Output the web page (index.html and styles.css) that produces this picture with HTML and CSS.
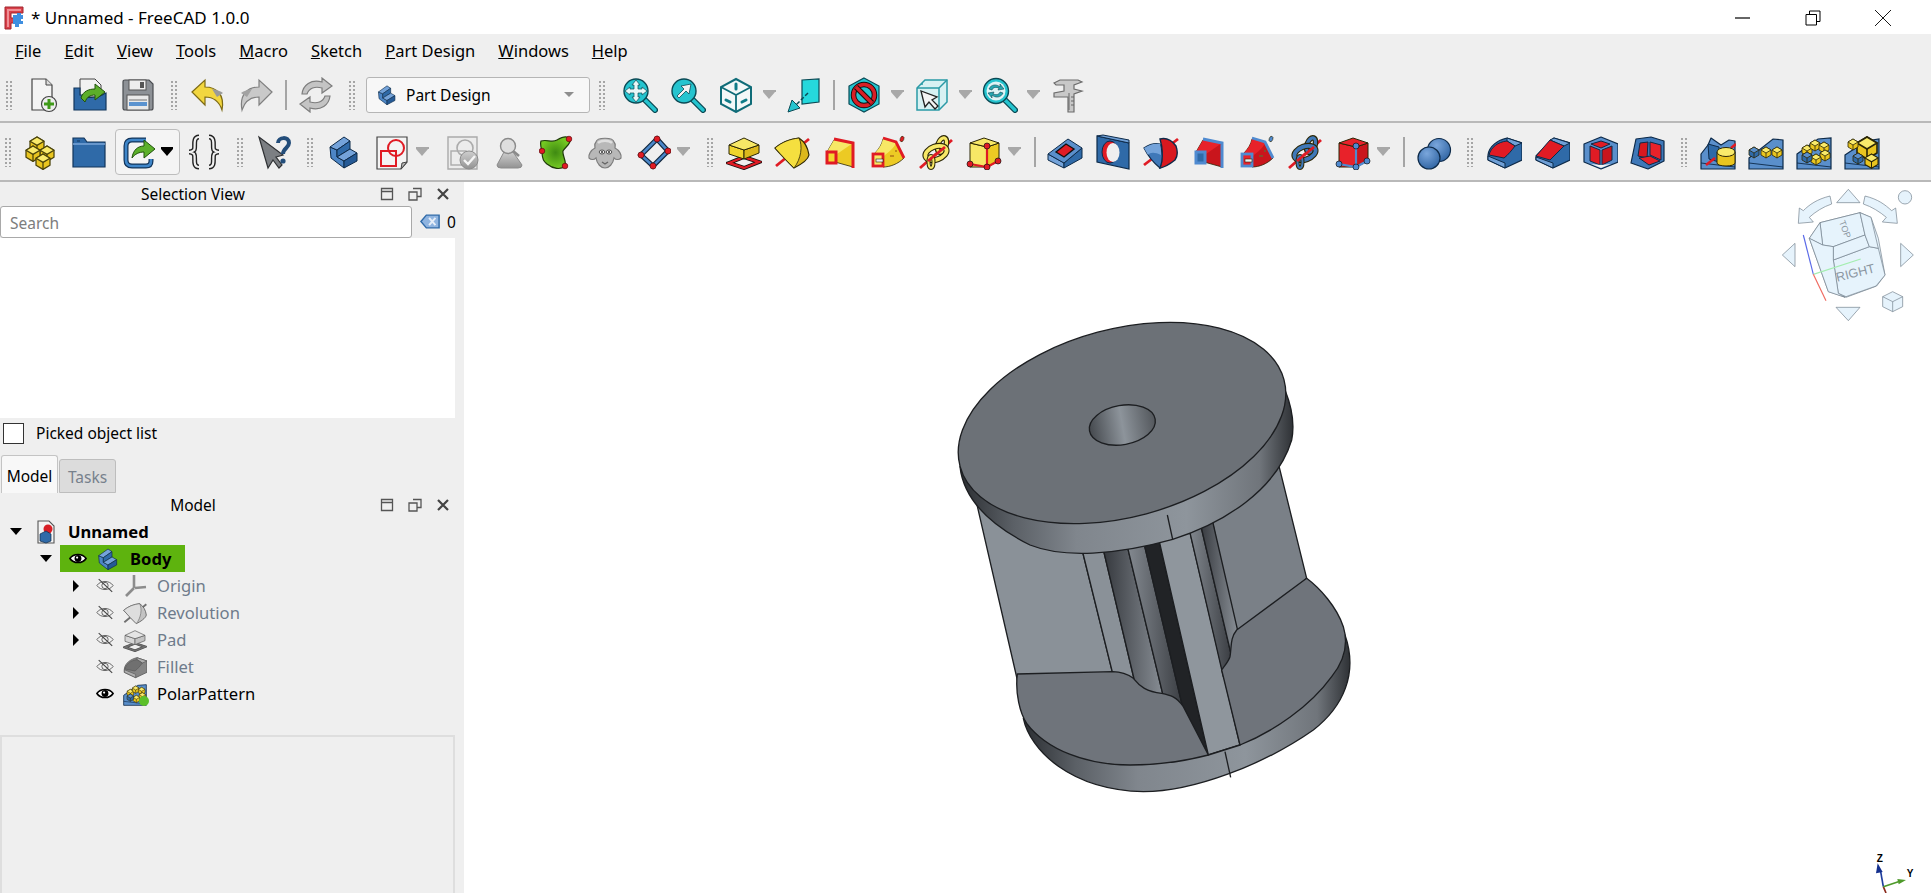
FILE: index.html

```html
<!DOCTYPE html>
<html lang="en">
<head>
    <meta charset="UTF-8">
    <title>* Unnamed - FreeCAD 1.0.0</title>
    <link rel="stylesheet" href="styles.css">
</head>
<body>
    <!-- icon sprite -->
    <svg class="sprite" xmlns="http://www.w3.org/2000/svg">
        <defs>
            <linearGradient id="rimGrad" x1="0" x2="1" y1="0" y2="0">
                <stop offset="0" stop-color="#2b2e32"/>
                <stop offset=".16" stop-color="#5b6066"/>
                <stop offset=".35" stop-color="#80868d"/>
                <stop offset=".68" stop-color="#8e959c"/>
                <stop offset=".9" stop-color="#70757b"/>
                <stop offset="1" stop-color="#2f3236"/>
            </linearGradient>
            <linearGradient id="holeGrad" x1="0" x2="1" y1="0" y2="0">
                <stop offset="0" stop-color="#45494e"/>
                <stop offset=".5" stop-color="#8d949b"/>
                <stop offset="1" stop-color="#53575c"/>
            </linearGradient>
            <linearGradient id="grooveA" x1="0" x2="1" y1="0" y2="0">
                <stop offset="0" stop-color="#32353a"/>
                <stop offset="1" stop-color="#8a9097"/>
            </linearGradient>
            <linearGradient id="grooveB" x1="0" x2="1" y1="0" y2="0">
                <stop offset="0" stop-color="#878d94"/>
                <stop offset="1" stop-color="#3a3d42"/>
            </linearGradient>
            <radialGradient id="blobGrad">
                <stop offset="0" stop-color="#3f8a12"/>
                <stop offset="1" stop-color="#74c922"/>
            </radialGradient>
            <radialGradient id="sphereGrad" cx=".4" cy=".3" r=".8">
                <stop offset="0" stop-color="#7aa6dc"/>
                <stop offset="1" stop-color="#2a5f9e"/>
            </radialGradient>
            <linearGradient id="greyGrad" x1="0" x2="0" y1="0" y2="1">
                <stop offset="0" stop-color="#cfcfcf"/>
                <stop offset="1" stop-color="#929292"/>
            </linearGradient>
            <g id="cy"><path d="M0 3 5 0 10 3V8L5 11 0 8Z" fill="#e9c51f"/><path d="M0 3 5 0 10 3 5 6Z" fill="#f9ea6a"/><path d="M5 6V11" fill="none"/></g>
            <g id="cb"><path d="M0 3 5 0 10 3V8L5 11 0 8Z" fill="#2f6aa8"/><path d="M0 3 5 0 10 3 5 6Z" fill="#5a8fcb"/><path d="M5 6V11" fill="none"/></g>
            <path id="base-lip" d="M1 29 35 33" fill="none" stroke="#0d2a49" stroke-width=".9"/>
        </defs>

        <symbol id="i-new" viewBox="0 0 36 36"><path d="M8 2H22L28 8V33H8Z" fill="#f4f4f4" stroke="#444" stroke-width="1.2"/><path d="M22 2V8H28" fill="#ddd" stroke="#444"/><circle cx="25" cy="27" r="7.5" fill="#eee" stroke="#444" stroke-width="1.2"/><path d="M25 22V32M20 27H30" stroke="#3f9a18" stroke-width="3"/></symbol>
        <symbol id="i-open" viewBox="0 0 36 36"><path d="M8 2H23L29 8V20H8Z" fill="#f2f2f2" stroke="#444"/><path d="M2 11H8V18H11C15 22 20 20 24 20 28 20 31 17 34 16V33H2Z" fill="#2f6aa8" stroke="#13365c" stroke-width="1.2"/><path d="M9 21C11 14 17 12 23 12V7L33 15 23 23V18C18 18 15 20 13 25Z" fill="#5cae2a" stroke="#20520c"/></symbol>
        <symbol id="i-save" viewBox="0 0 36 36"><path d="M3 5Q3 3 5 3H29L33 7V31Q33 33 31 33H5Q3 33 3 31Z" fill="#8d9196" stroke="#4a4d51" stroke-width="1.2"/><rect x="9" y="3" width="17" height="10" fill="#eee" stroke="#555"/><rect x="20" y="5" width="4" height="6" fill="#555"/><rect x="7" y="18" width="22" height="15" fill="#e9e9e9" stroke="#555"/><path d="M9 23H27" stroke="#999" stroke-width="1.5"/><rect x="9" y="25" width="18" height="4" fill="#5b93cf"/></symbol>
        <symbol id="i-undo" viewBox="0 0 36 36"><path d="M2 15 15 3V10C26 10 35 17 32 33 29 24 24 20 15 20V28Z" fill="#f2d63f" stroke="#7d6a14" stroke-width="1.2"/><path d="M22 12C27 13 31 14 33 16L27 20Z" fill="#9a9a9a"/></symbol>
        <symbol id="i-redo" viewBox="0 0 36 36"><path d="M34 15 21 3V10C10 10 1 17 4 33 7 24 12 20 21 20V28Z" fill="#c9c9c9" stroke="#808080" stroke-width="1.2"/><path d="M14 12C9 13 5 14 3 16L9 20Z" fill="#a2a2a2"/></symbol>
        <symbol id="i-refresh" viewBox="0 0 36 36"><path d="M4 17C5 8 13 2 24 5V1L34 9 24 16V11C17 9 11 11 9 17Z" fill="#c4c4c4" stroke="#7d7d7d" stroke-width="1.2"/><path d="M32 19C31 28 23 34 12 31V35L2 27 12 20V25C19 27 25 25 27 19Z" fill="#c4c4c4" stroke="#7d7d7d" stroke-width="1.2"/></symbol>
        <symbol id="i-body" viewBox="0 0 36 36"><g stroke="#0d2a49" stroke-linejoin="round"><path d="M4 13 11 16V23L18 27V34L5 24Z" fill="#4d86c6"/><path d="M4 13 18 3 24 7 11 16Z" fill="#74a3da"/><path d="M11 16 24 7V15L11 23Z" fill="#2f6aa8"/><path d="M11 23 24 15 31 19 18 27Z" fill="#74a3da"/><path d="M18 27 31 19V27L18 34Z" fill="#255a96"/></g></symbol>
        <symbol id="i-fitall" viewBox="0 0 36 36"><path d="M23 23 33 33" stroke="#0b4a55" stroke-width="6" stroke-linecap="round"/><path d="M23 23 33 33" stroke="#25c4cf" stroke-width="3.4" stroke-linecap="round"/><circle cx="14" cy="14" r="12" fill="#25c4cf" stroke="#0b4a55" stroke-width="1.4"/><path d="M14 3 18 8H16V12H20V10L25 14 20 18V16H16V20H18L14 25 10 20H12V16H8V18L3 14 8 10V12H12V8H10Z" fill="#e9f6f7" stroke="#0b4a55" stroke-width=".7"/></symbol>
        <symbol id="i-fitsel" viewBox="0 0 36 36"><path d="M23 23 33 33" stroke="#0b4a55" stroke-width="6" stroke-linecap="round"/><path d="M23 23 33 33" stroke="#25c4cf" stroke-width="3.4" stroke-linecap="round"/><circle cx="14" cy="14" r="12" fill="#25c4cf" stroke="#0b4a55" stroke-width="1.4"/><path d="M21 7 19 17 16 14 9 21 7 19 14 12 11 9Z" fill="#f2f2f2" stroke="#0b4a55" stroke-width=".8"/></symbol>
        <symbol id="i-iso" viewBox="0 0 36 36"><path d="M18 2 33 10V27L18 35 3 27V10Z" fill="#f3f8f8" stroke="#0f6c78" stroke-width="2"/><path d="M3 10 18 18 33 10M18 18V35" fill="none" stroke="#0f6c78" stroke-width="1.8"/><path d="M18 7V12M8 23 12 25M24 25 28 23" stroke="#0f7c88" stroke-width="3" stroke-linecap="round"/></symbol>
        <symbol id="i-plane" viewBox="0 0 36 36"><path d="M16 3 33 2V25L16 27Z" fill="#25d8dc" stroke="#0b4a55" stroke-width="1.2"/><path d="M22 16 10 28" stroke="#0b4a55" stroke-width="1.5" stroke-dasharray="4 2"/><path d="M2 35 6 23 14 31Z" fill="#25c4cf" stroke="#0b4a55"/></symbol>
        <symbol id="i-no" viewBox="0 0 36 36"><path d="M18 1 33 9V27L18 35 3 27V9Z" fill="#25c4cf" stroke="#0b4a55" stroke-width="1.2"/><circle cx="18" cy="18" r="10.5" fill="#25c4cf" stroke="#111" stroke-width="5.5"/><circle cx="18" cy="18" r="10.5" fill="none" stroke="#d81f26" stroke-width="3.6"/><path d="M10 10 26 26" stroke="#111" stroke-width="5.5"/><path d="M10 10 26 26" stroke="#d81f26" stroke-width="3.4"/></symbol>
        <symbol id="i-boxsel" viewBox="0 0 36 36"><path d="M3 11 11 3H33V25L25 33H3Z" fill="#d8f1f3" stroke="#2a9aa6" stroke-width="1.5"/><path d="M3 11H25V33M25 11 33 3M8 6V8" fill="none" stroke="#2a9aa6" stroke-width="1.5"/><path d="M7 14 11 30 15 25 21 32 24 29 18 23 23 20Z" fill="#f4f4f4" stroke="#222" stroke-width="1.3"/></symbol>
        <symbol id="i-sync" viewBox="0 0 36 36"><path d="M23 23 33 33" stroke="#0b4a55" stroke-width="6" stroke-linecap="round"/><path d="M23 23 33 33" stroke="#25c4cf" stroke-width="3.4" stroke-linecap="round"/><circle cx="14" cy="14" r="12.5" fill="#25c4cf" stroke="#0b4a55" stroke-width="1.4"/><circle cx="14" cy="14" r="9.5" fill="#dff3f5"/><path d="M7 12C9 7 15 7 18 10V7L22 12 16 13 17 11C14 10 11 10 10 13ZM21 16C19 21 13 21 10 18V21L6 16 12 15 11 17C14 18 17 18 18 15Z" fill="#25a8b2" stroke="#0b4a55" stroke-width=".6"/></symbol>
        <symbol id="i-measure" viewBox="0 0 36 36"><path d="M4 6 10 3H28L32 5 24 8V12L32 14 24 17V35H18V20H4V16L14 14V8H6Z" fill="#c8c8c8" stroke="#6d6d6d" stroke-width="1.2"/><path d="M19 16V33M21 20H24M21 24H24M21 28H24" stroke="#666"/></symbol>
        <symbol id="i-parts" viewBox="0 0 36 36"><g stroke="#4b430a" stroke-width=".9" stroke-linejoin="round"><use href="#cy" transform="translate(7 3) scale(1.4)"/><use href="#cy" transform="translate(17 12) scale(1.4)"/><use href="#cy" transform="translate(3 12) scale(1.4)"/><use href="#cy" transform="translate(13 20) scale(1.4)"/></g></symbol>
        <symbol id="i-folder" viewBox="0 0 36 36"><path d="M2 4H13L16 8H34V33H2Z" fill="#2f6aa8" stroke="#12345a" stroke-width="1.2"/><path d="M2 10H34" stroke="#7aa6d8" stroke-width="1.5"/><path d="M6 7H9" stroke="#12345a"/></symbol>
        <symbol id="i-link" viewBox="0 0 36 36"><path d="M24 6H10Q4 6 4 12V26Q4 32 10 32H24Q29 32 29 27V25" fill="none" stroke="#12345a" stroke-width="5"/><path d="M24 6H10Q4 6 4 12V26Q4 32 10 32H24Q29 32 29 27V25" fill="none" stroke="#3f86c9" stroke-width="2.6"/><path d="M10 24C11 16 16 12 22 12V6L33 15 22 24V18C17 18 13 20 10 24Z" fill="#5cb02a" stroke="#20520c"/></symbol>
        <symbol id="i-braces" viewBox="0 0 36 36"><path d="M13 3C6 3 10 14 8 16 7 17 5 18 3 18 5 18 7 19 8 20 10 23 6 33 13 33M23 3C30 3 26 14 28 16 29 17 31 18 33 18 31 18 29 19 28 20 26 23 30 33 23 33" fill="none" stroke="#222" stroke-width="5"/><path d="M13 3C6 3 10 14 8 16 7 17 5 18 3 18 5 18 7 19 8 20 10 23 6 33 13 33M23 3C30 3 26 14 28 16 29 17 31 18 33 18 31 18 29 19 28 20 26 23 30 33 23 33" fill="none" stroke="#f0f0f0" stroke-width="2.2"/></symbol>
        <symbol id="i-help" viewBox="0 0 36 36"><path d="M3 3 12 34 17 26 23 34 26 31 20 23 27 21Z" fill="#7c7f83" stroke="#2e3033" stroke-width="1.2"/><path d="M22 9C22 3 33 2 33 9 33 14 27 14 27 20" fill="none" stroke="#234d7a" stroke-width="4"/><circle cx="27" cy="27" r="2.6" fill="#234d7a"/></symbol>
        <symbol id="i-sketch" viewBox="0 0 36 36"><path d="M3 3H33V28L27 35H3Z" fill="#f4f4f4" stroke="#444" stroke-width="1.2"/><path d="M27 35 28 29 33 28Z" fill="#bbb" stroke="#444"/><circle cx="22" cy="14" r="8" fill="none" stroke="#e01b24" stroke-width="2"/><rect x="7" y="17" width="15" height="15" fill="none" stroke="#e01b24" stroke-width="2"/></symbol>
        <symbol id="i-validate" viewBox="0 0 36 36"><path d="M5 3H34V35H5Z" fill="#ececec" stroke="#ababab" stroke-width="1.4"/><rect x="8" y="17" width="15" height="14" fill="none" stroke="#ababab" stroke-width="1.4"/><circle cx="22" cy="14" r="8" fill="none" stroke="#ababab" stroke-width="1.6"/><circle cx="26" cy="26" r="9" fill="url(#greyGrad)" stroke="#8c8c8c"/><path d="M21 26 25 30 32 22" fill="none" stroke="#f5f5f5" stroke-width="2.4"/></symbol>
        <symbol id="i-attach" viewBox="0 0 36 36"><path d="M13 18 6 31Q6 34 10 34H27Q31 34 31 31L22 18Z" fill="url(#greyGrad)" stroke="#8c8c8c"/><path d="M22 17 28 22" stroke="#8a8a8a" stroke-width="2.6"/><circle cx="17" cy="12" r="7.500" fill="#dedede" stroke="#8a8a8a" stroke-width="1.4"/></symbol>
        <symbol id="i-blob" viewBox="0 0 36 36"><path d="M2 7C8 5 13 9 18 6S28 1 31 5C33 9 26 13 24 17 23 21 28 28 26 32 22 36 14 35 8 30 6 28 3 27 3 17 2 14 1 10 2 7Z" fill="url(#blobGrad)" stroke="#1f3a0a" stroke-width="1.2"/><g fill="#e01b24" stroke="#5c0a0e" stroke-width=".7"><circle cx="30" cy="5" r="2.800"/><circle cx="3" cy="17" r="2.800"/><circle cx="26" cy="32" r="2.800"/></g></symbol>
        <symbol id="i-sheep" viewBox="0 0 36 36"><path d="M9 8C10 3 26 3 27 8 29 10 28 12 28 14 32 16 35 21 34 24 32 26 29 26 27 24 26 30 22 34 18 34 14 34 10 30 9 24 7 26 4 26 2 24 1 21 4 16 8 14 8 12 7 10 9 8Z" fill="#b8b8b8" stroke="#7d7d7d" stroke-width="1.2"/><path d="M11 9C14 6 22 6 25 9" fill="none" stroke="#dedede" stroke-width="2.400"/><ellipse cx="15" cy="18" rx="2.800" ry="2" fill="#eee" stroke="#555"/><ellipse cx="22" cy="18" rx="2.800" ry="2" fill="#eee" stroke="#555"/><circle cx="15" cy="18" r="1" fill="#333"/><circle cx="22" cy="18" r="1" fill="#333"/><path d="M15 28 18 30 21 28" fill="none" stroke="#666" stroke-width="1.400"/></symbol>
        <symbol id="i-datum" viewBox="0 0 36 36"><path d="M22 5 33 17 18 32 6 21Z" fill="none" stroke="#10263d" stroke-width="5"/><path d="M22 5 33 17 18 32 6 21Z" fill="none" stroke="#4a86c8" stroke-width="2.600"/><g fill="#e01b24" stroke="#5c0a0e" stroke-width=".7"><circle cx="22" cy="5" r="3"/><circle cx="33" cy="17" r="3"/><circle cx="18" cy="32" r="3"/><circle cx="6" cy="21" r="3"/></g></symbol>
        <symbol id="i-pad" viewBox="0 0 36 36"><path d="M3 29 18 23 33 28 18 34Z" fill="none" stroke="#111" stroke-width="4"/><path d="M3 29 18 23 33 28 18 34Z" fill="none" stroke="#e01b24" stroke-width="2.400"/><g stroke="#2b2606" stroke-linejoin="round"><path d="M3 11V20L18 25V16Z" fill="#f0d42c"/><path d="M18 16V25L33 19V11Z" fill="#dcb81c"/><path d="M3 11 18 4 33 11 18 16Z" fill="#f7e866"/></g></symbol>
        <symbol id="i-revolve" viewBox="0 0 36 36"><path d="M2 32 35 5" stroke="#e01b24" stroke-width="2.800"/><path d="M1 14C8 8 16 5 25 4 31 8 34 14 35 21 34 26 26 31 20 34 14 28 8 22 1 14Z" fill="#dcb81c" stroke="#2b2606" stroke-width="1.200"/><path d="M1 14C8 8 16 5 25 4 29 12 27 25 20 34 14 28 8 22 1 14Z" fill="#f5df3f" stroke="#2b2606" stroke-width=".8"/></symbol>
        <symbol id="i-groove" viewBox="0 0 36 36"><path d="M1 31 35 5" stroke="#e01b24" stroke-width="2.800"/><path d="M17 5C25 3 30 8 33 12 35 18 35 22 32 26 27 30 22 33 17 34 20 26 20 14 17 5Z" fill="#d8181f" stroke="#0d2a49" stroke-width="1.400"/><path d="M1 14C7 10 12 9 17 10 20 18 20 26 17 34 12 30 6 24 1 14Z" fill="#3f78b8" stroke="#0d2a49" stroke-width="1.200"/><path d="M1 14C7 10 12 9 17 10 18 14 18 17 18 21 12 18 7 18 5 21Z" fill="#74a3da"/></symbol>
        <symbol id="i-loft" viewBox="0 0 36 36"><path d="M12 6 31 9V33L13 28 5 18Z" fill="var(--d)" stroke="#2b2606" stroke-width=".8"/><path d="M12 6 31 9 15 20 5 18Z" fill="var(--a)"/><path d="M12 5 31 9V34" fill="none" stroke="var(--b)" stroke-width="3"/><rect x="5" y="18" width="9" height="11" fill="var(--e)" stroke="var(--b)" stroke-width="3"/></symbol>
        <symbol id="i-pipe" viewBox="0 0 36 36"><path d="M13 5 26 8 34 24C28 30 20 33 13 33L5 19C9 15 12 10 13 5Z" fill="var(--d)" stroke="#2b2606" stroke-width=".8"/><path d="M13 5 26 8C25 14 18 18 14 22L5 19C9 15 12 10 13 5Z" fill="var(--a)"/><path d="M13 4 26 8 34 24" fill="none" stroke="var(--b)" stroke-width="2.800"/><rect x="3" y="20" width="10" height="12" fill="var(--a)" stroke="var(--b)" stroke-width="2.800"/><rect x="6" y="25" width="7" height="3" fill="#efefef" stroke="#2b2606" stroke-width=".6"/><ellipse cx="32" cy="5" rx="1.800" ry="2.800" fill="var(--b)" stroke="#2b2606" stroke-width=".6" transform="rotate(20 32 5)"/><path d="M20 22H24M25 17H27" stroke="var(--f)" stroke-width="2"/></symbol>
        <symbol id="i-helix" viewBox="0 0 36 36"><path d="M2 34 34 6" stroke="var(--b)" stroke-width="2.800"/><g fill="none"><ellipse cx="24" cy="11" rx="4" ry="7.500" transform="rotate(20 24 11)" stroke="#2b2606" stroke-width="5.500"/><ellipse cx="24" cy="11" rx="4" ry="7.500" transform="rotate(20 24 11)" stroke="var(--a)" stroke-width="3.200"/><ellipse cx="18" cy="19" rx="11" ry="6.500" transform="rotate(-20 18 19)" stroke="#2b2606" stroke-width="6"/><ellipse cx="18" cy="19" rx="11" ry="6.500" transform="rotate(-20 18 19)" stroke="var(--a)" stroke-width="3.800"/><ellipse cx="13" cy="28" rx="2.500" ry="6" stroke="#2b2606" stroke-width="4"/><ellipse cx="13" cy="28" rx="2.500" ry="6" stroke="var(--a)" stroke-width="2"/></g><path d="M10 27 27 13" stroke="var(--b)" stroke-width="2.800"/></symbol>
        <symbol id="i-prim" viewBox="0 0 36 36"><g stroke="#2b2606" stroke-linejoin="round"><path d="M4 9 21 13V33H4Z" fill="var(--a)"/><path d="M21 13 33 9V27L21 33Z" fill="var(--d)"/><path d="M4 9 18 4 33 9 21 13Z" fill="var(--a)"/></g><path d="M21 12V33M4 30 21 33 32 27" fill="none" stroke="var(--b)" stroke-width="2.200"/><g fill="var(--b)" stroke="#111" stroke-width=".7"><circle cx="21" cy="12" r="3"/><circle cx="4" cy="30" r="3"/><circle cx="21" cy="33" r="3"/><circle cx="32" cy="27" r="3"/></g></symbol>
        <symbol id="i-pocket" viewBox="0 0 36 36"><g stroke="#0d2a49" stroke-linejoin="round"><path d="M1 20V26L17 34V29Z" fill="#74a3da"/><path d="M17 29V34L35 24V14Z" fill="#2f6aa8"/><path d="M1 20 21 5 35 14 17 29Z" fill="#5a8fcb"/></g><path d="M9 18 19 10 27 15 17 23Z" fill="#e01b24" stroke="#111" stroke-width="1.400"/></symbol>
        <symbol id="i-hole" viewBox="0 0 36 36"><path d="M2 2 34 9V35L2 28Z" fill="#2f6aa8" stroke="#0d2a49" stroke-width="1.200"/><path d="M2 2 8 1 34 6V9Z" fill="#6f9fd6" stroke="#0d2a49"/><ellipse cx="15" cy="18" rx="8" ry="11" fill="#e01b24" stroke="#0d2a49"/><ellipse cx="18" cy="18.500" rx="6.500" ry="9.500" fill="#efefef"/></symbol>
        <symbol id="i-fillet" viewBox="0 0 36 36"><g stroke="#0d2a49" stroke-linejoin="round"><path d="M2 21C3 12 12 6 21 4L36 9V26L19 34 2 26Z" fill="#2f6aa8" stroke-width="1.200"/><path d="M21 4 36 9 29 12 21 7Z" fill="#6f9fd6"/><path d="M3 21C5 13 12 8 21 7L29 12C26 16 22 21 18 24Z" fill="#e01b24"/><path d="M2 22 19 29V34L2 26Z" fill="#6f9fd6"/></g></symbol>
        <symbol id="i-chamfer" viewBox="0 0 36 36"><g stroke="#0d2a49" stroke-linejoin="round"><path d="M2 22 20 4 36 9V26L19 34 2 26Z" fill="#2f6aa8" stroke-width="1.200"/><path d="M20 4 36 9 30 12 16 6Z" fill="#6f9fd6"/><path d="M2 22 16 6 30 12 16 26Z" fill="#e01b24"/><path d="M2 23 19 29V34L2 26Z" fill="#6f9fd6"/></g></symbol>
        <symbol id="i-draft" viewBox="0 0 36 36"><g stroke="#0d2a49" stroke-linejoin="round"><path d="M19 3 36 10V28L19 35 2 28V10Z" fill="#5a8fcb" stroke-width="1.200"/><path d="M8 12 18 16V31L8 27Z" fill="#e01b24"/><path d="M20 16 30 12V26L20 31Z" fill="#c9151c"/><path d="M9 10 19 7 28 10 19 14Z" fill="#e01b24"/></g><path d="M9 30 19 34 29 30 19 31Z" fill="#f2f2f2"/></symbol>
        <symbol id="i-thick" viewBox="0 0 36 36"><g stroke="#0d2a49" stroke-linejoin="round"><path d="M6 5 21 3 34 7V27L18 35 1 29Z" fill="#3f78b8" stroke-width="1.200"/><path d="M10 9 18 8 17 24 8 22Z" fill="#d8181f"/><path d="M20 8 31 11V26L20 21Z" fill="#e8222a"/><path d="M9 24 20 22 30 27 19 31Z" fill="#e8222a"/></g></symbol>
        <symbol id="i-mirror" viewBox="0 0 36 36"><g stroke="#0d2a49" stroke-linejoin="round"><path d="M1 35V20L8 11 11 4 21 11 29 6 35 7V35Z" fill="#5a8fcb" stroke-width="1.200"/><path d="M8 10 19 13V28L9 25Z" fill="#2f6aa8"/></g><use href="#base-lip"/><path d="M6 31 15 24M31 14 36 10" stroke="#e01b24" stroke-width="2.600"/><g stroke="#2b2606"><path d="M17 18V29C17 33 35 33 35 29V18Z" fill="#e9c51f"/><ellipse cx="26" cy="18" rx="9" ry="4.500" fill="#f9ea6a"/></g></symbol>
        <symbol id="i-linear" viewBox="0 0 36 36"><path d="M1 24 25 5 35 6V35H1Z" fill="#5a8fcb" stroke="#0d2a49" stroke-width="1.200"/><use href="#base-lip"/><g stroke="#2b2606" stroke-width=".8"><use href="#cb" transform="translate(1 13)"/><use href="#cy" transform="translate(13 13)"/><use href="#cy" transform="translate(24 13)"/></g></symbol>
        <symbol id="i-polar" viewBox="0 0 36 36"><path d="M1 20 22 5 35 4V35H1Z" fill="#5a8fcb" stroke="#0d2a49" stroke-width="1.200"/><use href="#base-lip"/><g stroke="#2b2606" stroke-width=".8"><use href="#cy" transform="translate(6 11)"/><use href="#cy" transform="translate(14 6)"/><use href="#cy" transform="translate(23 8)"/><use href="#cy" transform="translate(24 16)"/><use href="#cy" transform="translate(15 20)"/><use href="#cb" transform="translate(6 18)"/></g></symbol>
        <symbol id="i-multi" viewBox="0 0 36 36"><path d="M1 21 22 7 35 5V35H1Z" fill="#5a8fcb" stroke="#0d2a49" stroke-width="1.200"/><use href="#base-lip"/><g stroke="#2b2606" stroke-width=".8"><use href="#cy" transform="translate(13 3) scale(2)"/><use href="#cy" transform="translate(4 5)"/><use href="#cb" transform="translate(9 19)"/><use href="#cy" transform="translate(21 20) scale(1.300)"/></g></symbol>
        <symbol id="i-bool" viewBox="0 0 36 36"><circle cx="23" cy="16" r="11.500" fill="url(#sphereGrad)" stroke="#0d2a49" stroke-width="1.200"/><circle cx="13" cy="24" r="11" fill="url(#sphereGrad)" stroke="#0d2a49" stroke-width="1.200"/></symbol>
        <symbol id="i-eye" viewBox="0 0 20 14"><path d="M1 7C5 1 15 1 19 7 15 13 5 13 1 7Z" fill="#fff" stroke="#000" stroke-width="1.800"/><circle cx="10" cy="7" r="3.800" fill="#000"/><circle cx="9" cy="6" r="1.200" fill="#fff"/></symbol>
        <symbol id="i-eyeoff" viewBox="0 0 20 16"><path d="M1 8C5 2 15 2 19 8 15 14 5 14 1 8Z" fill="none" stroke="#666" stroke-width="1.100"/><circle cx="10" cy="8" r="3.500" fill="none" stroke="#666" stroke-width="1.100"/><path d="M3 1 18 15" stroke="#444" stroke-width="1.200"/></symbol>
        <symbol id="i-origin" viewBox="0 0 24 24"><path d="M11 1V14M12 14 23 13M11 14 3 22" fill="none" stroke="#8c8c8c" stroke-width="2.600"/></symbol>
        <symbol id="i-doc" viewBox="0 0 18 24"><path d="M1 1H12L17 6V23H1Z" fill="#f4f4f4" stroke="#555" stroke-width="1.100"/><circle cx="11" cy="9" r="4.500" fill="#d81f26"/><path d="M3 14 9 11 14 14V21L9 23 3 21Z" fill="#2f6aa8" stroke="#0d2a49" stroke-width=".7"/></symbol>
        <symbol id="i-clear" viewBox="0 0 22 16"><path d="M1 8 7 1H21V15H7Z" fill="#8fb4e0" stroke="#2f6aa8" stroke-width="1.600"/><path d="M10 4 17 12M17 4 10 12" stroke="#e6eef8" stroke-width="2.200"/></symbol>
        <symbol id="i-dockfloat" viewBox="0 0 14 14"><path d="M1.500 1.500H12.500V12.500H1.500ZM1.500 4.500H12.500" fill="none" stroke="#555" stroke-width="1.300"/></symbol>
        <symbol id="i-dockrestore" viewBox="0 0 14 14"><path d="M5 1.500H13V9.500H9.500M1 5H9V13H1Z" fill="none" stroke="#555" stroke-width="1.300"/></symbol>
        <symbol id="i-dockclose" viewBox="0 0 14 14"><path d="M2 2 12 12M12 2 2 12" stroke="#444" stroke-width="2.200"/></symbol>
    </svg>

    <div class="app">
        <div class="titlebar">
            <svg class="logo" viewBox="0 0 20 24">
                <path d="M1 1H19V7H7V12H12V17H7V23H1Z" fill="#d8404a" stroke="#a3242c"/>
                <path d="M3 3H17V5H5V21H3Z" fill="#ef8f95"/>
                <path d="M9 9H13V7H17V9H19V13H17V15H19V18H15V21H11V18H9Z" fill="#3f8fe0"/>
            </svg>
            <span class="title-text">* Unnamed - FreeCAD 1.0.0</span>
            <div class="win-buttons">
                <div class="win-btn">
                    <svg viewBox="0 0 16 16"><path d="M0 8H15" stroke="#000" stroke-width="1.200"/></svg>
                </div>
                <div class="win-btn">
                    <svg viewBox="0 0 16 16"><path d="M1 4.500H11.500V15H1ZM4.500 4V1H15V11.500H12" fill="none" stroke="#000"/></svg>
                </div>
                <div class="win-btn">
                    <svg viewBox="0 0 16 16"><path d="M0 0 16 16M16 0 0 16" stroke="#000" stroke-width=".9"/></svg>
                </div>
            </div>
        </div>

        <div class="menubar">
            <span class="menu-item"><u>F</u>ile</span>
            <span class="menu-item"><u>E</u>dit</span>
            <span class="menu-item"><u>V</u>iew</span>
            <span class="menu-item"><u>T</u>ools</span>
            <span class="menu-item"><u>M</u>acro</span>
            <span class="menu-item"><u>S</u>ketch</span>
            <span class="menu-item"><u>P</u>art Design</span>
            <span class="menu-item"><u>W</u>indows</span>
            <span class="menu-item"><u>H</u>elp</span>
        </div>

        <div class="toolbar toolbar-one">
            <i class="grip"></i>
            <div class="tool"><svg><use href="#i-new"/></svg></div>
            <div class="tool"><svg><use href="#i-open"/></svg></div>
            <div class="tool"><svg><use href="#i-save"/></svg></div>
            <i class="grip"></i>
            <div class="tool"><svg><use href="#i-undo"/></svg></div>
            <div class="tool"><svg><use href="#i-redo"/></svg></div>
            <i class="sep"></i>
            <div class="tool"><svg><use href="#i-refresh"/></svg></div>
            <i class="grip grip-wide"></i>
            <div class="combo">
                <svg class="combo-icon"><use href="#i-body"/></svg>
                <span class="combo-text">Part Design</span>
                <i class="combo-arrow"></i>
            </div>
            <i class="grip grip-wide"></i>
            <div class="tool"><svg><use href="#i-fitall"/></svg></div>
            <div class="tool"><svg><use href="#i-fitsel"/></svg></div>
            <div class="tool"><svg><use href="#i-iso"/></svg></div><i class="drop"></i>
            <div class="tool"><svg><use href="#i-plane"/></svg></div>
            <i class="sep"></i>
            <div class="tool"><svg><use href="#i-no"/></svg></div><i class="drop"></i>
            <div class="tool"><svg><use href="#i-boxsel"/></svg></div><i class="drop"></i>
            <div class="tool"><svg><use href="#i-sync"/></svg></div><i class="drop"></i>
            <div class="tool"><svg><use href="#i-measure"/></svg></div>
        </div>

        <div class="toolbar toolbar-two">
            <i class="grip"></i>
            <div class="tool"><svg><use href="#i-parts"/></svg></div>
            <div class="tool"><svg><use href="#i-folder"/></svg></div>
            <div class="tool-active">
                <svg><use href="#i-link"/></svg>
                <i class="drop drop-dark"></i>
            </div>
            <div class="tool"><svg><use href="#i-braces"/></svg></div>
            <i class="grip"></i>
            <div class="tool"><svg><use href="#i-help"/></svg></div>
            <i class="grip"></i>
            <div class="tool"><svg><use href="#i-body"/></svg></div>
            <div class="tool"><svg><use href="#i-sketch"/></svg></div><i class="drop"></i>
            <div class="tool"><svg><use href="#i-validate"/></svg></div>
            <div class="tool"><svg><use href="#i-attach"/></svg></div>
            <div class="tool"><svg><use href="#i-blob"/></svg></div>
            <div class="tool"><svg><use href="#i-sheep"/></svg></div>
            <div class="tool"><svg><use href="#i-datum"/></svg></div><i class="drop"></i>
            <i class="grip"></i>
            <div class="tool"><svg><use href="#i-pad"/></svg></div>
            <div class="tool"><svg><use href="#i-revolve"/></svg></div>
            <div class="tool add"><svg><use href="#i-loft"/></svg></div>
            <div class="tool add"><svg><use href="#i-pipe"/></svg></div>
            <div class="tool add"><svg><use href="#i-helix"/></svg></div>
            <div class="tool add"><svg><use href="#i-prim"/></svg></div><i class="drop"></i>
            <i class="sep"></i>
            <div class="tool"><svg><use href="#i-pocket"/></svg></div>
            <div class="tool"><svg><use href="#i-hole"/></svg></div>
            <div class="tool"><svg><use href="#i-groove"/></svg></div>
            <div class="tool sub"><svg><use href="#i-loft"/></svg></div>
            <div class="tool sub"><svg><use href="#i-pipe"/></svg></div>
            <div class="tool cut"><svg><use href="#i-helix"/></svg></div>
            <div class="tool sub"><svg><use href="#i-prim"/></svg></div><i class="drop"></i>
            <i class="sep"></i>
            <div class="tool"><svg><use href="#i-bool"/></svg></div>
            <i class="grip"></i>
            <div class="tool"><svg><use href="#i-fillet"/></svg></div>
            <div class="tool"><svg><use href="#i-chamfer"/></svg></div>
            <div class="tool"><svg><use href="#i-draft"/></svg></div>
            <div class="tool"><svg><use href="#i-thick"/></svg></div>
            <i class="grip"></i>
            <div class="tool"><svg><use href="#i-mirror"/></svg></div>
            <div class="tool"><svg><use href="#i-linear"/></svg></div>
            <div class="tool"><svg><use href="#i-polar"/></svg></div>
            <div class="tool"><svg><use href="#i-multi"/></svg></div>
        </div>

        <div class="main">
            <div class="dock">
                <div class="dock-title">
                    <span class="dock-name">Selection View</span>
                    <svg class="dock-btn"><use href="#i-dockfloat"/></svg>
                    <svg class="dock-btn"><use href="#i-dockrestore"/></svg>
                    <svg class="dock-btn"><use href="#i-dockclose"/></svg>
                </div>
                <div class="search-row">
                    <div class="search-input">Search</div>
                    <svg class="search-clear"><use href="#i-clear"/></svg>
                    <span class="search-count">0</span>
                </div>
                <div class="selection-list"></div>
                <div class="picked-row">
                    <span class="checkbox"></span>
                    <span>Picked object list</span>
                </div>
                <div class="tabs">
                    <div class="tab tab-on">Model</div>
                    <div class="tab tab-off">Tasks</div>
                </div>
                <div class="dock-title dock-title-model">
                    <span class="dock-name">Model</span>
                    <svg class="dock-btn"><use href="#i-dockfloat"/></svg>
                    <svg class="dock-btn"><use href="#i-dockrestore"/></svg>
                    <svg class="dock-btn"><use href="#i-dockclose"/></svg>
                </div>
                <div class="tree">
                    <div class="row depth-0">
                        <i class="arrow-down"></i>
                        <svg class="tree-icon tree-doc"><use href="#i-doc"/></svg>
                        <span class="label label-bold">Unnamed</span>
                    </div>
                    <div class="row depth-1">
                        <i class="arrow-down"></i>
                        <div class="row-selected">
                            <svg class="eye"><use href="#i-eye"/></svg>
                            <svg class="tree-icon"><use href="#i-body"/></svg>
                            <span class="label label-bold">Body</span>
                        </div>
                    </div>
                    <div class="row depth-2">
                        <i class="arrow-right"></i>
                        <svg class="eye"><use href="#i-eyeoff"/></svg>
                        <svg class="tree-icon"><use href="#i-origin"/></svg>
                        <span class="label label-dim">Origin</span>
                    </div>
                    <div class="row depth-2">
                        <i class="arrow-right"></i>
                        <svg class="eye"><use href="#i-eyeoff"/></svg>
                        <svg class="tree-icon dim"><use href="#i-revolve"/></svg>
                        <span class="label label-dim">Revolution</span>
                    </div>
                    <div class="row depth-2">
                        <i class="arrow-right"></i>
                        <svg class="eye"><use href="#i-eyeoff"/></svg>
                        <svg class="tree-icon dim"><use href="#i-pad"/></svg>
                        <span class="label label-dim">Pad</span>
                    </div>
                    <div class="row depth-2">
                        <i class="arrow-none"></i>
                        <svg class="eye"><use href="#i-eyeoff"/></svg>
                        <svg class="tree-icon dim"><use href="#i-fillet"/></svg>
                        <span class="label label-dim">Fillet</span>
                    </div>
                    <div class="row depth-2">
                        <i class="arrow-none"></i>
                        <svg class="eye"><use href="#i-eye"/></svg>
                        <span class="polar-wrap">
                            <svg class="tree-icon"><use href="#i-polar"/></svg>
                            <i class="polar-badge"></i>
                        </span>
                        <span class="label">PolarPattern</span>
                    </div>
                </div>
                <div class="property-panel"></div>
            </div>

            <div class="viewport">
                <svg class="model" viewBox="0 0 1380 1500">
                    <g stroke="#1c1e21" stroke-width="4" stroke-linejoin="round">
                        <!-- shaft -->
                        <path d="M140 580 449 690 548 1090 262 1110Z" fill="#8a9198"/>
                        <path d="M840 600 1040 440 1130 805 920 990Z" fill="#7a8087"/>
                        <path d="M449 690 512 685 620 1140 548 1090Z" fill="#8a9198"/>
                        <path d="M512 685 585 680 705 1180 620 1140Z" fill="url(#grooveA)"/>
                        <path d="M585 680 635 670 760 1200 705 1180Z" fill="url(#grooveB)"/>
                        <path d="M635 670 680 660 835 1335 760 1200Z" fill="#212326"/>
                        <path d="M680 660 770 625 930 1305 835 1335Z" fill="#8f969d"/>
                        <path d="M770 625 805 615 905 1040 880 1100Z" fill="url(#grooveB)"/>
                        <path d="M805 615 840 600 925 970 905 1040Z" fill="url(#grooveA)"/>
                        <!-- lower flange -->
                        <path d="M280 1225C300 1320 420 1440 640 1445 790 1445 1000 1365 1150 1260 1240 1190 1285 1090 1245 975L930 1305 835 1335Z" fill="url(#rimGrad)"/>
                        <path d="M885 1325 902 1402" fill="none"/>
                        <path d="M262 1092C255 1150 270 1210 290 1240 350 1320 470 1365 600 1365 690 1365 770 1352 835 1335L760 1190C740 1160 720 1155 695 1150 650 1145 630 1130 610 1105 590 1090 570 1085 548 1085Z" fill="#6f747b"/>
                        <path d="M930 1305C1030 1265 1140 1190 1205 1100 1245 1050 1255 1000 1240 950 1220 890 1170 835 1130 805L920 960C900 985 905 1010 900 1040 895 1055 885 1065 875 1080Z" fill="#6f747b"/>
                        <!-- top flange -->
                        <path d="M90 470C100 560 170 640 300 705 400 745 560 735 728 688 880 640 1040 540 1085 390 1095 340 1085 290 1065 240Z" fill="url(#rimGrad)"/>
                        <path d="M712 615 728 688" fill="none"/>
                        <ellipse cx="576" cy="339" rx="503" ry="282" transform="rotate(-15 576 339)" fill="#6c7177"/>
                        <ellipse cx="577" cy="345" rx="100" ry="59" transform="rotate(-10 577 345)" fill="url(#holeGrad)"/>
                    </g>
                </svg>

                <svg class="navicube" viewBox="0 6 483 444">
                    <g fill="#e6f3fc" stroke="#6f7d8a" stroke-width="2" stroke-linejoin="round">
                        <path d="M235 28 200 68H270Z"/>
                        <path d="M75 190 37 225 75 260Z"/>
                        <path d="M392 190 430 225 392 260Z"/>
                        <path d="M198 382H270L235 422Z"/>
                        <circle cx="405" cy="52" r="20"/>
                        <path d="M180 48C140 58 118 74 100 92L88 84 85 130 130 126 118 112C135 96 160 80 185 72Z"/>
                        <path d="M285 48C325 58 345 74 365 92L377 84 382 130 337 126 349 112C330 96 305 80 280 72Z"/>
                        <path d="M150 128 270 98 303 112 325 175 345 285 320 318 228 352 175 335 118 175Z"/>
                        <path d="M150 128 270 98 285 165 190 200 158 195Z"/>
                        <path d="M190 240 298 200 325 205 345 285 318 318 228 350 205 340Z"/>
                        <path d="M190 200 285 165 298 200 190 240Z"/>
                        <path d="M118 175 150 128 158 195Z"/>
                        <path d="M118 175 158 195 190 200 190 240 205 340 225 352 175 335Z"/>
                        <path d="M270 98 303 112 325 205 298 200 285 165Z"/>
                        <path d="M368 335 398 350V380L368 395 338 380V350Z"/>
                        <path d="M338 350 368 365 398 350M368 365V395" fill="none"/>
                    </g>
                    <text class="cube-top" transform="translate(207 125) rotate(70)">TOP</text>
                    <text class="cube-right" transform="translate(202 305) rotate(-14)">RIGHT</text>
                    <path d="M100 165 130 283" stroke="#5a6ae8" stroke-width="3.500" fill="none"/>
                    <path d="M130 283 272 237" stroke="#a4eeb0" stroke-width="3.500" fill="none"/>
                    <path d="M130 283 168 362" stroke="#ef6a60" stroke-width="3.500" fill="none"/>
                </svg>

                <svg class="axis" viewBox="0 0 243 159">
                    <path d="M100 140 108 159" stroke="#8a2a1c" stroke-width="5"/>
                    <path d="M100 140 92 95" stroke="#1f3e9e" stroke-width="5"/>
                    <path d="M83 70 78 100 98 96Z" fill="#14308e"/>
                    <path d="M100 140 145 125" stroke="#4e9a2a" stroke-width="5"/>
                    <path d="M168 120 142 117 146 133Z" fill="#4e9a2a"/>
                    <text class="axis-label" x="80" y="65">Z</text>
                    <text class="axis-label" x="170" y="112">Y</text>
                </svg>
            </div>
        </div>
    </div>
</body>
</html>
```

FILE: styles.css

```css
* {
    box-sizing: border-box;
}

body {
    margin: 0;
    padding: 0;
    font-family: "Noto Sans", "Open Sans", sans-serif;
    font-size: 15.5px;
    color: #000;
    background-color: #fff;
    overflow: hidden;
}

.sprite {
    position: absolute;
    width: 0;
    height: 0;
}

.app {
    display: flex;
    flex-direction: column;
    height: 893px;
    overflow: hidden;
}

/* title bar */
.titlebar {
    display: flex;
    align-items: center;
    height: 34px;
    padding-top: 1px;
    background-color: #fff;
    flex-shrink: 0;
}

.logo {
    width: 20px;
    height: 24px;
    margin-left: 4px;
}

.title-text {
    margin-left: 7px;
    font-size: 17px;
}

.win-buttons {
    display: flex;
    margin-left: auto;
    margin-right: 13px;
}

.win-btn {
    width: 70px;
    display: flex;
    justify-content: center;
}

.win-btn svg {
    width: 16px;
    height: 16px;
}

/* menu */
.menubar {
    display: flex;
    align-items: center;
    height: 34px;
    padding: 0 0 2px 15px;
    gap: 23px;
    font-size: 16.5px;
    background-color: #efefef;
    flex-shrink: 0;
}

/* toolbars */
.toolbar {
    display: flex;
    align-items: center;
    background-color: #efefef;
    border-bottom: 2px solid #b9b9b9;
    flex-shrink: 0;
}

.toolbar-one {
    height: 55px;
    padding-left: 18px;
}

.toolbar-two {
    height: 59px;
    padding-left: 17px;
}

.toolbar-one .drop {
    width: 20px;
}

.tool {
    width: 48px;
    height: 36px;
    display: flex;
    justify-content: center;
    flex-shrink: 0;
}

.tool svg {
    width: 36px;
    height: 36px;
}

.tool-active {
    width: 65px;
    height: 46px;
    margin: 0 0 0 2px;
    padding-left: 6px;
    display: flex;
    align-items: center;
    background-color: #f4f4f4;
    border: 1px solid #bdbdbd;
    border-radius: 4px;
    flex-shrink: 0;
}

.tool-active svg {
    width: 36px;
    height: 36px;
}

.grip {
    display: block;
    width: 22px;
    height: 30px;
    flex-shrink: 0;
    background-image: radial-gradient(circle, #a5a5a5 1px, transparent 1.2px);
    background-size: 4px 4px;
    background-repeat: repeat;
    background-clip: content-box;
    padding: 0 7px;
}

.grip-wide {
    width: 26px;
    padding: 0 9px;
}

.toolbar-one > .grip:first-child,
.toolbar-two > .grip:first-child {
    margin-left: -17px;
    width: 17px;
    padding: 0 4px;
}

.sep {
    display: block;
    width: 12px;
    height: 30px;
    flex-shrink: 0;
    background-color: #a5a5a5;
    background-clip: content-box;
    padding: 0 5px;
}

.drop {
    display: block;
    position: relative;
    width: 21px;
    height: 10px;
    flex-shrink: 0;
}

.drop::before {
    content: "";
    position: absolute;
    left: 3px;
    top: 0;
    width: 13px;
    height: 2px;
    background-color: #a8a8a8;
}

.drop::after {
    content: "";
    position: absolute;
    left: 3px;
    top: 2px;
    border-left: 6.5px solid transparent;
    border-right: 6.5px solid transparent;
    border-top: 7px solid #a8a8a8;
}

.toolbar-two > .drop::before,
.toolbar-two > .drop::after {
    left: 0;
}

.drop-dark::before {
    background-color: #000;
    width: 12px;
}

.drop-dark::after {
    border-top-color: #000;
    border-left-width: 6px;
    border-right-width: 6px;
}

.combo {
    width: 224px;
    height: 36px;
    display: flex;
    align-items: center;
    padding-left: 9px;
    background-color: #f7f7f7;
    border: 1px solid #b5b5b5;
    border-radius: 3px;
    flex-shrink: 0;
}

.combo-icon {
    width: 22px;
    height: 22px;
}

.combo-text {
    margin-left: 8px;
}

.combo-arrow {
    margin-left: auto;
    margin-right: 15px;
    border-left: 5px solid transparent;
    border-right: 5px solid transparent;
    border-top: 5px solid #8e8e8e;
}

.add {
    --a: #f7e866;
    --b: #e01b24;
    --d: #ecca24;
    --e: #f3d82f;
    --f: #c08a1a;
}

.sub {
    --a: #e8222a;
    --b: #4f8ad0;
    --d: #c9151c;
    --e: #2f6aa8;
    --f: #8a4a2a;
}

.cut {
    --a: #3f78b8;
    --b: #e01b24;
}

/* main area */
.main {
    display: flex;
    flex: 1;
    min-height: 0;
}

.dock {
    width: 464px;
    display: flex;
    flex-direction: column;
    background-color: #efefef;
    flex-shrink: 0;
}

.dock-title {
    display: flex;
    align-items: center;
    height: 23px;
    padding-right: 12px;
    flex-shrink: 0;
}

.dock-name {
    width: 386px;
    margin-right: -6px;
    text-align: center;
}

.dock-btn {
    width: 14px;
    height: 14px;
    margin-right: 14px;
}

.dock-btn:last-child {
    margin-right: 0;
}

.search-row {
    display: flex;
    align-items: center;
    height: 33px;
    flex-shrink: 0;
}

.search-input {
    width: 412px;
    height: 32px;
    padding: 5px 9px;
    line-height: 22px;
    color: #7d7d7d;
    background-color: #fff;
    border: 1px solid #a9a9a9;
    border-radius: 3px;
}

.search-clear {
    width: 20px;
    height: 15px;
    margin-left: 8px;
}

.search-count {
    margin-left: 7px;
}

.selection-list {
    width: 455px;
    height: 180px;
    background-color: #fff;
    flex-shrink: 0;
}

.picked-row {
    display: flex;
    align-items: center;
    height: 30px;
    padding-left: 3px;
    flex-shrink: 0;
}

.checkbox {
    width: 21px;
    height: 21px;
    margin-right: 12px;
    background-color: #fff;
    border: 1px solid #333;
}

.tabs {
    display: flex;
    align-items: flex-end;
    height: 38px;
    margin-top: 7px;
    padding-left: 1px;
    flex-shrink: 0;
}

.tab {
    display: flex;
    align-items: center;
    justify-content: center;
}

.tab-on {
    width: 57px;
    height: 38px;
    padding-top: 2px;
    background-color: #f8f8f8;
    border: 1px solid #c4c4c4;
    border-bottom: none;
    border-radius: 3px 3px 0 0;
}

.tab-off {
    width: 57px;
    height: 34px;
    padding-top: 2px;
    margin-left: 1px;
    color: #77818c;
    background-color: #dcdcdc;
    border: 1px solid #bdbdbd;
    border-radius: 3px 3px 0 0;
}

.dock-title-model {
    height: 24px;
}

/* tree */
.tree {
    height: 218px;
    padding-top: 1px;
    font-size: 16.6px;
    flex-shrink: 0;
}

.row {
    display: flex;
    align-items: center;
    height: 27px;
}

.depth-0 {
    padding-left: 1px;
}

.depth-1 {
    padding-left: 31px;
}

.depth-2 {
    padding-left: 60px;
}

.arrow-down,
.arrow-right,
.arrow-none {
    display: block;
    width: 30px;
    flex-shrink: 0;
    position: relative;
    height: 10px;
}

.arrow-down::after {
    content: "";
    position: absolute;
    left: 9px;
    top: 1px;
    border-left: 6.5px solid transparent;
    border-right: 6.5px solid transparent;
    border-top: 7px solid #000;
}

.arrow-right::after {
    content: "";
    position: absolute;
    left: 13px;
    top: -1px;
    border-top: 6px solid transparent;
    border-bottom: 6px solid transparent;
    border-left: 6px solid #000;
}

.row-selected {
    display: flex;
    align-items: center;
    height: 27px;
    width: 125px;
    margin-left: -1px;
    padding-left: 3px;
    background-color: #5eb30e;
}

.eye {
    width: 30px;
    height: 15px;
    padding: 0 6px;
    flex-shrink: 0;
}

.tree-icon {
    width: 24px;
    height: 24px;
    margin: 0 3px;
    flex-shrink: 0;
}

.tree-doc {
    width: 18px;
    margin: 0 6px;
}

.dim {
    filter: grayscale(1) opacity(.75);
}

.polar-wrap {
    position: relative;
    display: flex;
    flex-shrink: 0;
}

.polar-badge {
    position: absolute;
    right: 1px;
    bottom: 0;
    width: 10px;
    height: 10px;
    background-color: #5cc02a;
    border-radius: 50%;
}

.label {
    margin-left: 7px;
}

.label-bold {
    font-weight: 700;
}

.label-dim {
    color: #6e7b8b;
}

.property-panel {
    flex: 1;
    width: 455px;
    background-color: #efefef;
    border: 2px solid #dedede;
    border-bottom: none;
}

/* 3d view */
.viewport {
    position: relative;
    flex: 1;
    background-color: #fff;
    overflow: hidden;
}

.model {
    position: absolute;
    left: 466px;
    top: 128px;
    width: 460px;
    height: 500px;
}

.navicube {
    position: absolute;
    right: 0;
    top: 0;
    width: 161px;
    height: 148px;
}

.cube-top {
    font-family: "Liberation Sans", sans-serif;
    font-size: 27px;
    fill: #8c97a2;
}

.cube-right {
    font-family: "Liberation Sans", sans-serif;
    font-size: 38px;
    fill: #8c97a2;
}

.axis {
    position: absolute;
    right: 0;
    bottom: 0;
    width: 81px;
    height: 53px;
}

.axis-label {
    font-family: "Liberation Sans", sans-serif;
    font-size: 30px;
    font-weight: 700;
    fill: #000;
}
```
